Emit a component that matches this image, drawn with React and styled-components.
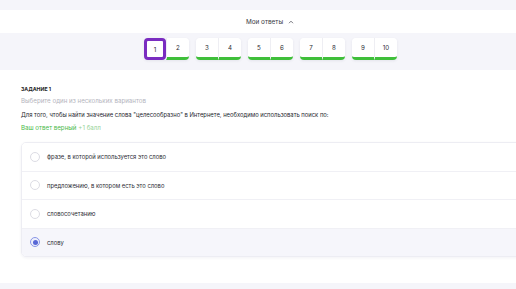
import React from 'react';
import styled, { createGlobalStyle } from 'styled-components';

const GlobalStyle = createGlobalStyle`
  html, body {
    margin: 0;
    padding: 0;
    background: #ffffff;
    overflow: hidden;
  }
  body {
    font-family: Inter, 'Noto Sans', sans-serif;
    color: #2b2b33;
  }
`;

const Page = styled.div`
  width: 540px;
  display: flex;
  flex-direction: column;
`;

const TopStrip = styled.div`
  height: 10px;
  background: #f5f5fa;
`;

const Header = styled.div`
  height: 23px;
  display: flex;
  align-items: center;
  justify-content: center;
  gap: 5px;
  font-size: 6.4px;
  color: #3a3a44;
  background: #fff;
`;

const NavBand = styled.div`
  background: #f5f5fa;
  padding: 5px 0 10px 1px;
  display: flex;
  justify-content: center;
  gap: 7px;
`;

const Pair = styled.div`
  display: flex;
  border-radius: 4px;
  box-shadow: 0 1px 3px rgba(40, 40, 80, 0.08);
`;

const NumButton = styled.div`
  width: ${(p) => (p.$first ? '22px' : '23px')};
  height: 22px;
  box-sizing: border-box;
  display: flex;
  align-items: center;
  justify-content: center;
  font-size: 6.2px;
  color: #2b2b33;
  background: #fff;
  border-bottom: 3px solid ${(p) => (p.$done ? '#3fbf3a' : '#fff')};
  border-radius: ${(p) => (p.$first ? '4px 0 0 4px' : '0 4px 4px 0')};
  & + & {
    border-left: 1px solid #eeeef3;
  }
  ${(p) =>
    p.$active &&
    `
    border: 3px solid #7a2cc0;
    border-radius: 4px;
  `}
`;

const Content = styled.div`
  padding: 14px 0 0 21px;
  height: 199px;
  background: #fff;
`;

const TaskTitle = styled.div`
  font-size: 5.2px;
  font-weight: 700;
  color: #1e1e26;
  height: 10px;
  line-height: 10px;
`;

const Hint = styled.div`
  margin-top: 1px;
  font-size: 6.2px;
  color: #b4b4bd;
  line-height: 12px;
`;

const Question = styled.div`
  margin-top: 1.5px;
  font-size: 5.85px;
  color: #25252d;
  line-height: 12px;
`;

const Verdict = styled.div`
  margin-top: 1.5px;
  font-size: 6.2px;
  line-height: 12px;
  color: #48b948;
  span {
    color: #98d398;
  }
`;

const Options = styled.div`
  margin-top: 8px;
  border: 1px solid #ededf3;
  border-radius: 5px;
  overflow: hidden;
  box-shadow: 0 1px 3px rgba(40, 40, 80, 0.06);
`;

const Option = styled.div`
  height: 27.5px;
  display: flex;
  align-items: center;
  padding-left: 8px;
  gap: 7px;
  font-size: 5.85px;
  color: #2b2b33;
  background: ${(p) => (p.$selected ? '#f6f6fb' : '#fff')};
  & + & {
    border-top: 1px solid #f0f0f5;
  }
`;

const Radio = styled.span`
  width: 10px;
  height: 10px;
  box-sizing: border-box;
  border-radius: 50%;
  border: 1px solid ${(p) => (p.$checked ? '#8a96e6' : '#dcdce4')};
  background: ${(p) => (p.$checked ? '#eef0fc' : '#fff')};
  display: flex;
  align-items: center;
  justify-content: center;
  &::after {
    content: '';
    width: 5px;
    height: 5px;
    border-radius: 50%;
    background: ${(p) => (p.$checked ? '#5867d6' : 'transparent')};
  }
`;

const BottomStrip = styled.div`
  height: 10px;
  background: #f5f5fa;
`;

const pairs = [
  [1, 2],
  [3, 4],
  [5, 6],
  [7, 8],
  [9, 10],
];

const options = [
  'фразе, в которой используется это слово',
  'предложению, в котором есть это слово',
  'словосочетанию',
  'слову',
];

function App() {
  return (
    <>
      <GlobalStyle />
      <Page>
        <TopStrip />
        <Header>
          Мои ответы
          <svg width="6" height="4" viewBox="0 0 6 4" fill="none">
            <path d="M1 3.2L3 1.2L5 3.2" stroke="#55555f" strokeWidth="0.8" />
          </svg>
        </Header>
        <NavBand>
          {pairs.map((pair) => (
            <Pair key={pair[0]}>
              {pair.map((n, i) => (
                <NumButton key={n} $first={i === 0} $active={n === 1} $done={n !== 1}>
                  {n}
                </NumButton>
              ))}
            </Pair>
          ))}
        </NavBand>
        <Content>
          <TaskTitle>ЗАДАНИЕ 1</TaskTitle>
          <Hint>Выберите один из нескольких вариантов</Hint>
          <Question>
            Для того, чтобы найти значение слова "целесообразно" в Интернете, необходимо
            использовать поиск по:
          </Question>
          <Verdict>
            Ваш ответ верный <span>+1 балл</span>
          </Verdict>
          <Options>
            {options.map((text, i) => (
              <Option key={text} $selected={i === 3}>
                <Radio $checked={i === 3} />
                {text}
              </Option>
            ))}
          </Options>
        </Content>
        <BottomStrip />
      </Page>
    </>
  );
}

export default App;
